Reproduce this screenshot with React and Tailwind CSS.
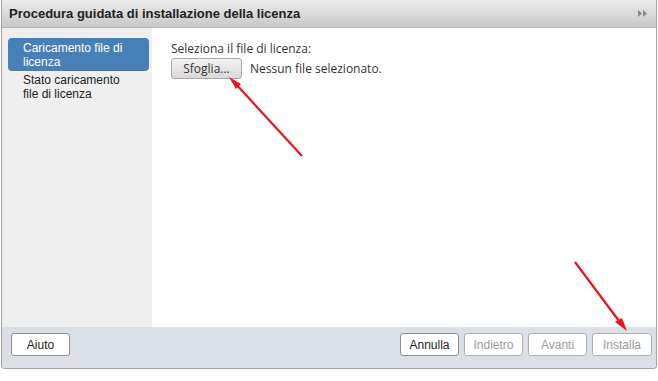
export default function App() {
  const sans = { fontFamily: '"Liberation Sans", Arial, sans-serif' };
  const ubu = { fontFamily: '"Open Sans", "DejaVu Sans", sans-serif' };

  return (
    <div className="relative w-[658px] h-[381px] bg-white overflow-hidden" style={sans}>
      <div className="ml-[1px] w-[656px] h-[369px] flex flex-col border-l border-r border-b border-[#a3a3a3] rounded-b-[4px] overflow-hidden">
        {/* header */}
        <div className="h-[28px] shrink-0 flex items-center justify-between pl-[7px] pr-[9px] bg-gradient-to-b from-[#ececec] to-[#c8c8c8] border-b border-[#b5b5b5]">
          <span className="text-[13px] font-bold text-[#222]">Procedura guidata di installazione della licenza</span>
          <svg width="9" height="7" viewBox="0 0 9 7">
            <path d="M0 0 L4 3.5 L0 7 Z M5 0 L9 3.5 L5 7 Z" fill="#8a8a8a" />
          </svg>
        </div>

        {/* body */}
        <div className="flex-1 flex min-h-0">
          <div className="w-[150px] shrink-0 bg-[#efefef] pt-[10px] pl-[6px] pr-[3px]">
            <div className="rounded-[4px] bg-[#4780b6] text-white text-[12px] leading-[14px] pl-[15px] pt-[3px] h-[33px]">
              Caricamento file di<br />licenza
            </div>
            <div className="text-[#222] text-[12px] leading-[14px] pl-[15px] pt-[2px]">
              Stato caricamento<br />file di licenza
            </div>
          </div>
          <div className="flex-1 pl-[19px] pt-[13px] text-[12px] text-[#333]" style={ubu}>
            <div className="leading-[16px]">Seleziona il file di licenza:</div>
            <div className="flex items-center gap-[8px] mt-[1px]">
              <button className="w-[71px] h-[21px] rounded-[3px] border border-[#a8a8a8] bg-gradient-to-b from-[#f3f3f3] to-[#d9d9d9] text-[12px] text-[#333]">
                Sfoglia...
              </button>
              <span>Nessun file selezionato.</span>
            </div>
          </div>
        </div>

        {/* footer */}
        <div className="h-[41px] shrink-0 bg-[#dae0e6] flex items-start justify-between pt-[6px] pl-[9px] pr-[4px] text-[12px]">
          <button className="w-[59px] h-[23px] bg-white border border-[#8f8f8f] rounded-[3px] text-[#222]">Aiuto</button>
          <div className="flex gap-[5px]">
            <button className="w-[59px] h-[23px] bg-white border border-[#8f8f8f] rounded-[3px] text-[#222]">Annulla</button>
            <button className="w-[59px] h-[23px] bg-white border border-[#b0b0b0] rounded-[3px] text-[#9a9a9a]">Indietro</button>
            <button className="w-[59px] h-[23px] bg-white border border-[#b0b0b0] rounded-[3px] text-[#9a9a9a]">Avanti</button>
            <button className="w-[60px] h-[23px] bg-white border border-[#b0b0b0] rounded-[3px] text-[#9a9a9a]">Installa</button>
          </div>
        </div>
      </div>

      {/* annotation arrows */}
      <svg className="absolute left-0 top-0 pointer-events-none" width="658" height="381">
        <line x1="302" y1="156" x2="234" y2="82" stroke="#e8141a" strokeWidth="2.2" />
        <path d="M229 77 L241 84 L236 89 Z" fill="#e8141a" />
        <line x1="575" y1="262" x2="622" y2="325" stroke="#e8141a" strokeWidth="2.2" />
        <path d="M627 331 L615 322 L622 318 Z" fill="#e8141a" />
      </svg>
    </div>
  );
}
